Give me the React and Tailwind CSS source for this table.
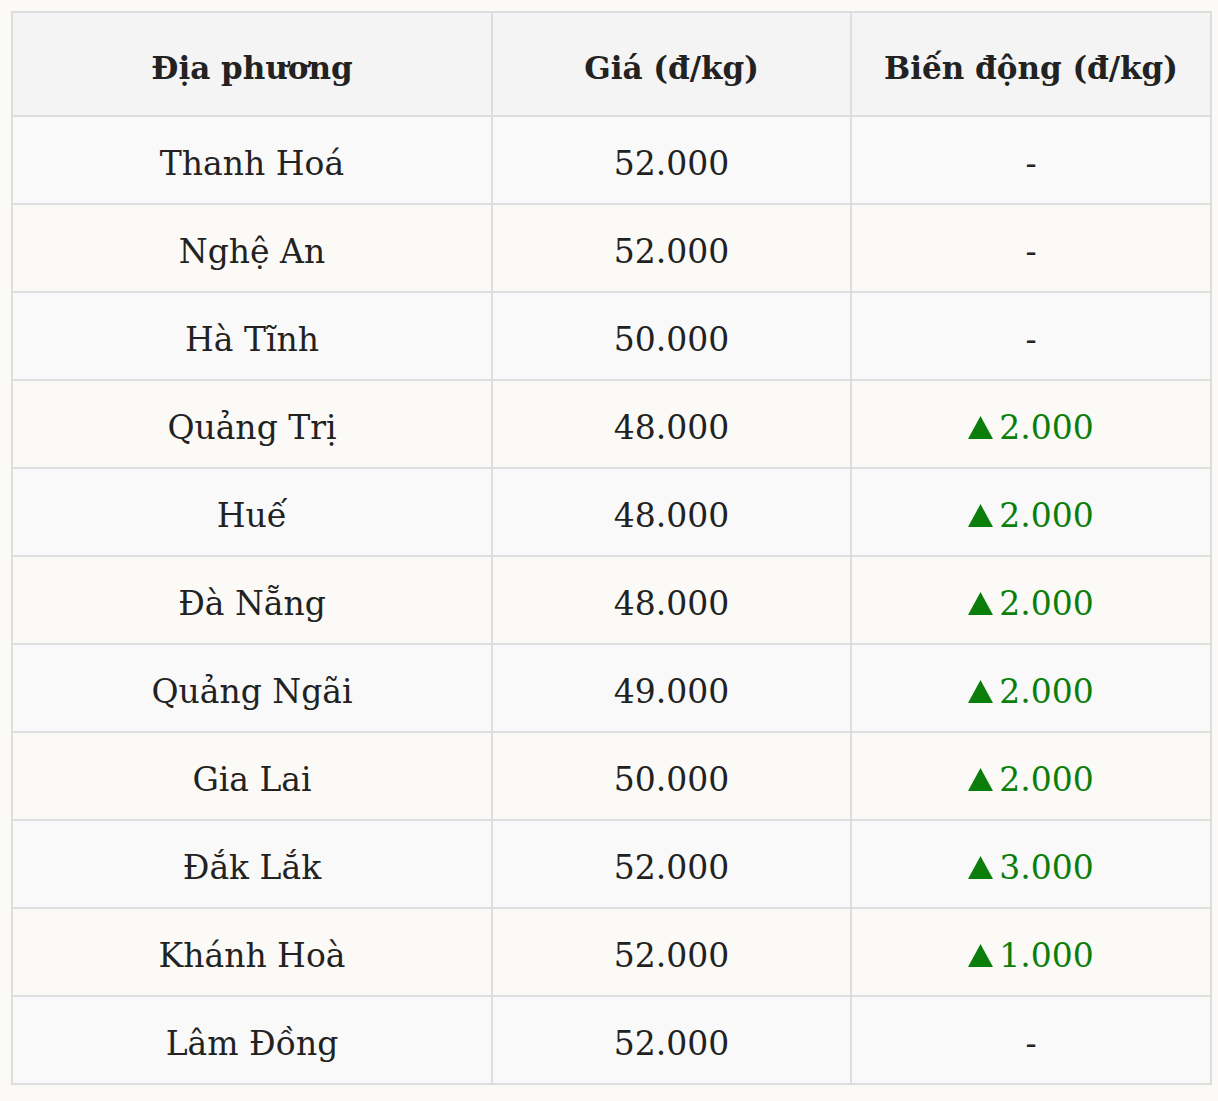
const ROWS = [
  ["Thanh Hoá", "52.000", null],
  ["Nghệ An", "52.000", null],
  ["Hà Tĩnh", "50.000", null],
  ["Quảng Trị", "48.000", "2.000"],
  ["Huế", "48.000", "2.000"],
  ["Đà Nẵng", "48.000", "2.000"],
  ["Quảng Ngãi", "49.000", "2.000"],
  ["Gia Lai", "50.000", "2.000"],
  ["Đắk Lắk", "52.000", "3.000"],
  ["Khánh Hoà", "52.000", "1.000"],
  ["Lâm Đồng", "52.000", null],
];

export default function App() {
  return (
    <div className="min-h-[1101px] bg-[#fbfaf6] pt-[11px] pl-[11px] font-['DejaVu_Serif',serif] text-[#222]">
      <table className="w-[1199px] table-fixed border-collapse border-2 border-[#dddddd]">
        <colgroup>
          <col className="w-[480px]" />
          <col className="w-[359px]" />
          <col className="w-[360px]" />
        </colgroup>
        <thead>
          <tr className="h-[104px] bg-[#f4f4f4]">
            {["Địa phương", "Giá (đ/kg)", "Biến động (đ/kg)"].map((h) => (
              <th key={h} className="border-2 border-[#dddddd] pt-[8px] text-center text-[31px] font-bold">
                {h}
              </th>
            ))}
          </tr>
        </thead>
        <tbody>
          {ROWS.map(([place, price, change], i) => (
            <tr key={place} className={i % 2 === 0 ? "h-[88px] bg-[#f9f9f9]" : "h-[88px] bg-[#fbfaf6]"}>
              <td className="border-2 border-[#dddddd] pt-[8px] text-center text-[33px]">{place}</td>
              <td className="border-2 border-[#dddddd] pt-[8px] text-center text-[33px]">{price}</td>
              <td className="border-2 border-[#dddddd] pt-[8px] text-center text-[33px]">
                {change ? (
                  <span className="text-[#0b7d0b]">
                    <svg viewBox="0 0 25 23" className="mr-[6px] inline-block h-[23px] w-[25px] align-baseline" fill="currentColor">
                      <polygon points="12.5,0 25,23 0,23" />
                    </svg>
                    {change}
                  </span>
                ) : (
                  "-"
                )}
              </td>
            </tr>
          ))}
        </tbody>
      </table>
    </div>
  );
}
